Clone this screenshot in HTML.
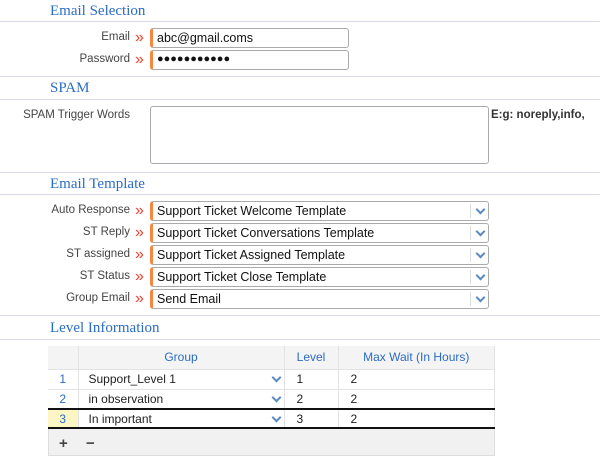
<!DOCTYPE html>
<html><head><style>
*{box-sizing:border-box;margin:0;padding:0}
body{width:608px;height:463px;background:#fff;font-family:"Liberation Sans",sans-serif;font-size:12px;color:#222;position:relative;overflow:hidden}
.h{position:absolute;left:50px;font-family:"Liberation Serif",serif;font-size:15px;color:#2b6cc4}
.ln{position:absolute;left:0;width:600px;height:1px;background:#dcdce8}
.lb{position:absolute;width:130px;left:0;text-align:right;color:#444;font-size:11.5px}
.ar{position:absolute;left:135px;color:#e8412b;font-size:16px;line-height:16px;letter-spacing:-3px}
.in{position:absolute;left:150px;height:20px;border:1px solid #aaa;border-left:3px solid #f5883e;border-radius:3px;padding:2px 4px;font-size:12.5px;color:#111}
.sel{width:339px}
.sel::after,.cv::after{content:"";position:absolute;right:4px;top:4px;width:5px;height:5px;border-right:2px solid #5a8ac0;border-bottom:2px solid #5a8ac0;transform:rotate(45deg)}
.sel::before{content:"";position:absolute;right:17px;top:2px;width:1px;height:14px;background:#ddd}
.cv{position:absolute;right:0;top:0;width:14px;height:14px}
table{position:absolute;left:48px;top:346px;width:447px;border-collapse:collapse;font-size:12px}
td,th{height:20px;border-right:1px solid #e3e3e3;border-bottom:1px solid #e3e3e3;padding:0}
th{background:#f4f4f4;color:#2b6cc4;font-weight:normal;height:23px}
.n{color:#2b6cc4;text-align:center;width:30px;background:#fff}
.wrap{position:absolute;left:48px;top:346px;width:447px;height:110px;border:1px solid #ddd;background:#f1f1f1}
.r3 td{border-top:2px solid #111;border-bottom:2px solid #111;height:19px}
</style></head><body>
<div class="h" style="top:3px">Email Selection</div>
<div class="ln" style="top:21px"></div>
<div class="lb" style="top:31px">Email</div><div class="ar" style="top:30px">»</div>
<div class="in" style="top:28px;width:199px">abc@gmail.coms</div>
<div class="lb" style="top:53px">Password</div><div class="ar" style="top:52px">»</div>
<div class="in" style="top:50px;width:199px;font-size:11px">●●●●●●●●●●●</div>
<div class="ln" style="top:76px"></div>
<div class="h" style="top:80px">SPAM</div>
<div class="ln" style="top:99px"></div>
<div class="lb" style="top:109px;width:130px">SPAM Trigger Words</div>
<div style="position:absolute;left:150px;top:106px;width:339px;height:58px;border:1px solid #aaa;border-radius:3px"></div>
<div style="position:absolute;left:491px;top:109px;font-size:11.5px;font-weight:bold;color:#333">E:g: noreply,info,</div>
<div class="ln" style="top:172px"></div>
<div class="h" style="top:176px">Email Template</div>
<div class="ln" style="top:194px"></div>
<div class="lb" style="top:204px">Auto Response</div><div class="ar" style="top:203px">»</div>
<div class="in sel" style="top:201px">Support Ticket Welcome Template</div>
<div class="lb" style="top:226px">ST Reply</div><div class="ar" style="top:225px">»</div>
<div class="in sel" style="top:223px">Support Ticket Conversations Template</div>
<div class="lb" style="top:248px">ST assigned</div><div class="ar" style="top:247px">»</div>
<div class="in sel" style="top:245px">Support Ticket Assigned Template</div>
<div class="lb" style="top:270px">ST Status</div><div class="ar" style="top:269px">»</div>
<div class="in sel" style="top:267px">Support Ticket Close Template</div>
<div class="lb" style="top:292px">Group Email</div><div class="ar" style="top:291px">»</div>
<div class="in sel" style="top:289px">Send Email</div>
<div class="ln" style="top:315px"></div>
<div class="h" style="top:320px">Level Information</div>
<div class="ln" style="top:339px"></div>
<div class="wrap"></div>
<table>
<tr><th style="width:30px"></th><th style="width:206px">Group</th><th style="width:54px">Level</th><th>Max Wait (In Hours)</th></tr>
<tr style="background:#fff"><td class="n">1</td><td style="padding-left:10px;position:relative">Support_Level 1<span class="cv"></span></td><td style="padding-left:12px">1</td><td style="padding-left:12px">2</td></tr>
<tr style="background:#fff"><td class="n">2</td><td style="padding-left:10px;position:relative">in observation<span class="cv"></span></td><td style="padding-left:12px">2</td><td style="padding-left:12px">2</td></tr>
<tr class="r3" style="background:#fff"><td class="n" style="background:#fbf6c4">3</td><td style="padding-left:10px;position:relative">In important<span class="cv"></span></td><td style="padding-left:12px">3</td><td style="padding-left:12px">2</td></tr>
</table>
<div style="position:absolute;left:59px;top:435px;font-size:15px;font-weight:bold;color:#444">+</div>
<div style="position:absolute;left:86px;top:435px;font-size:15px;font-weight:bold;color:#444">−</div>
</body></html>
